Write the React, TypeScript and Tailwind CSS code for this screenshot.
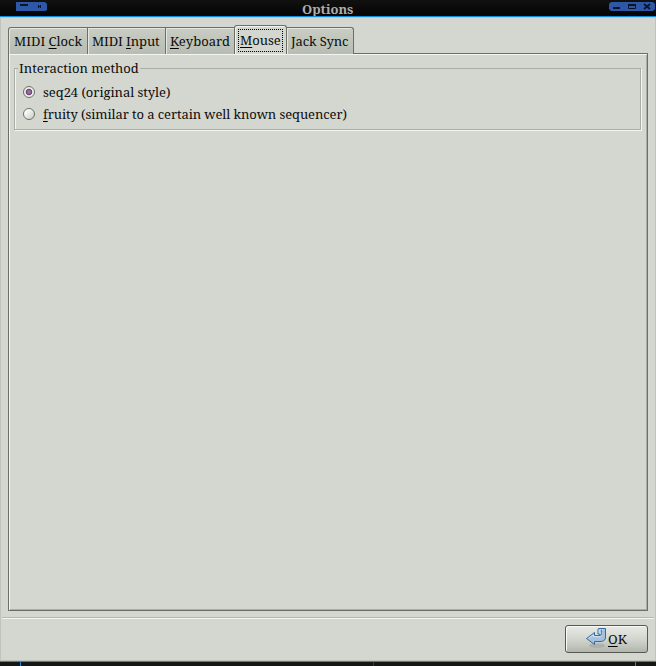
import React from "react";

type LabelProps = { before?: string; mnemonic?: string; after?: string; className?: string };

function Label({ before = "", mnemonic = "", after = "", className = "" }: LabelProps) {
  return (
    <span className={`block whitespace-nowrap text-[13px] leading-[16px] text-[#0c0c0c] ${className}`}>
      {before}
      {mnemonic && (
        <span className="underline decoration-black decoration-1 underline-offset-2 [text-decoration-skip-ink:none]">
          {mnemonic}
        </span>
      )}
      {after}
    </span>
  );
}

function Tab({ className, ...label }: LabelProps) {
  return (
    <div
      className={`h-[27px] shrink-0 border-t border-r border-[#6b6f67] bg-linear-to-b from-[#c9cdc4] to-[#b7bdb2] pt-[5px] shadow-[inset_1px_1px_0_#e4e7e0] ${className}`}
    >
      <Label {...label} />
    </div>
  );
}

function Radio({ checked }: { checked?: boolean }) {
  return (
    <svg className="block h-[14px] w-[14px] shrink-0" viewBox="0 0 14 14">
      <defs>
        <linearGradient id="radio" x1="0" y1="0" x2="1" y2="1">
          <stop offset="0.2" stopColor="#fff" />
          <stop offset="1" stopColor="#c3c7bf" />
        </linearGradient>
      </defs>
      <circle cx="7" cy="7" r="5.5" fill={checked ? "#eceeea" : "url(#radio)"} stroke="#6d7069" />
      {checked && <circle cx="7" cy="7" r="2.8" fill="#9d66a6" stroke="#59405f" />}
    </svg>
  );
}

export default function App() {
  return (
    <div className="flex h-[666px] w-[656px] flex-col overflow-hidden bg-[#111413] font-['Noto_Serif','Droid_Serif','DejaVu_Serif_Condensed','DejaVu_Serif',serif]">
      <header className="flex h-4 shrink-0 items-start bg-linear-to-b from-[#111] to-[#050505]">
        <svg className="mt-[2px] ml-4 h-[10px] w-[31px]" viewBox="0 0 31 10">
          <path d="M0 0H29L31 2V8L29 9H0Z" fill="#2d58a8" />
          <path d="M4 3H12" stroke="#0b1428" strokeWidth="2" />
          <path d="M22.5 3V6M24.5 3V6M22 4.5H25" stroke="#0b1428" />
        </svg>
        <span className="mt-[1px] ml-[255px] w-[60px] text-[13px] leading-[16px] font-bold whitespace-nowrap text-[#adadad]">Options</span>
        <svg className="mt-[2px] ml-[247px] h-[10px] w-[46px]" viewBox="0 0 46 10">
          <path d="M2 0H44L46 2V7L44 9H2L0 7V2Z" fill="#2d58a8" />
          <path d="M4 6H11" stroke="#0b1428" strokeWidth="2" />
          <path d="M19.5 2.5V6.5H26.5V2.5Z" stroke="#0b1428" fill="none" />
          <path d="M19 3H27" stroke="#0b1428" strokeWidth="2" />
          <path d="M35 2L41 7M41 2L35 7" stroke="#0b1428" strokeWidth="1.8" />
        </svg>
      </header>

      <main className="flex h-[645px] shrink-0 flex-col border-t border-[#128ade] bg-[#d4d7d0] shadow-[inset_1px_1px_0_#bfc4bd,inset_-1px_-1px_0_#bfc4bd]">
        <div className="z-10 -mb-[1px] ml-2 flex h-[37px] items-end">
          <Tab before="MIDI " mnemonic="C" after="lock" className="w-[80px] rounded-tl-[3px] border-l pl-[5px]" />
          <Tab before="MIDI " mnemonic="I" after="nput" className="w-[78px] pl-[4px] tracking-[-0.1px]" />
          <Tab mnemonic="K" after="eyboard" className="w-[69px] pl-[4px]" />
          <div className="-ml-[1px] h-[29px] w-[53px] shrink-0 self-end rounded-t-[3px] border border-b-0 border-[#6b6f67] bg-[#d4d7d0] p-[3px] pb-0 shadow-[inset_1px_1px_0_#f1f3ef]">
            <div className="h-[23px] w-[45px] border border-dotted border-black pt-[2px] pl-[1px]">
              <Label mnemonic="M" after="ouse" />
            </div>
          </div>
          <Tab before="Jack Sync" className="w-[67px] rounded-tr-[3px] pl-[4px] tracking-[-0.1px]" />
        </div>

        <section className="ml-2 h-[558px] w-[640px] shrink-0 border border-[#6b6f67] pt-[6px] pl-[5px] shadow-[inset_1px_1px_0_#f4f5f2,inset_-1px_-1px_0_#a9ada5]">
          <fieldset className="h-[70px] w-[627px] border border-[#a9ada5] pl-[7px] shadow-[1px_1px_0_#f4f5f2,inset_1px_0_0_#f4f5f2]">
            <legend className="-ml-[4px] h-[16px] px-[1px]">
              <Label before="Interaction method" />
            </legend>
            <div className="mt-[5px] flex h-[22px] items-center">
              <Radio checked />
              <Label before="seq24 (original style)" className="ml-[7px] tracking-[-0.05px]" />
            </div>
            <div className="flex h-[22px] items-center">
              <Radio />
              <Label mnemonic="f" after="ruity (similar to a certain well known sequencer)" className="ml-[7px] tracking-[-0.09px]" />
            </div>
          </fieldset>
        </section>

        <hr className="mx-[2px] mt-[6px] h-[2px] shrink-0 border-t border-b border-t-[#b4b8b0] border-b-[#f4f5f2]" />
        <button className="mt-[6px] ml-[565px] flex h-[28px] w-[83px] shrink-0 rounded-[3px] border border-[#555951] bg-linear-to-b from-[#e8ebe5] via-[#d3d6cf] to-[#b1b6ac] shadow-[inset_1px_1px_0_#f8f9f7]">
          <svg className="mt-[1px] ml-[19px] h-[22px] w-[22px]" viewBox="0 0 22 22">
            <ellipse cx="12" cy="18.5" rx="8" ry="2.3" fill="#777" opacity=".25" />
            <path d="M1.5 11.5L9.5 5.5V8.5H15V7H13V2.5Q13 1.5 14 1.5H20.5V10Q20.5 14.5 15 14.5H9.5V17.5Z" fill="#a3c2e0" stroke="#3c68a0" />
            <path d="M3.5 11.5L8.5 7.8V9.7H15.5Q16.5 9.2 16.5 6H14.2V3Q15 2.6 16.5 2.6H18" fill="none" stroke="#d3e5f3" />
            <path d="M16.5 2.5V7Q16.5 8.5 15 8.5" fill="none" stroke="#4674aa" strokeWidth=".8" />
          </svg>
          <Label mnemonic="O" after="K" className="mt-[5px] ml-[1px]" />
        </button>
      </main>

      <footer className="flex h-[5px] border-t border-[#198bdc] bg-[#141716]">
        <div className="ml-5 w-px bg-[#198bdc]" />
        <div className="ml-[352px] w-px bg-[#343a37]" />
        <div className="ml-[261px] w-px bg-[#198bdc]" />
      </footer>
    </div>
  );
}
